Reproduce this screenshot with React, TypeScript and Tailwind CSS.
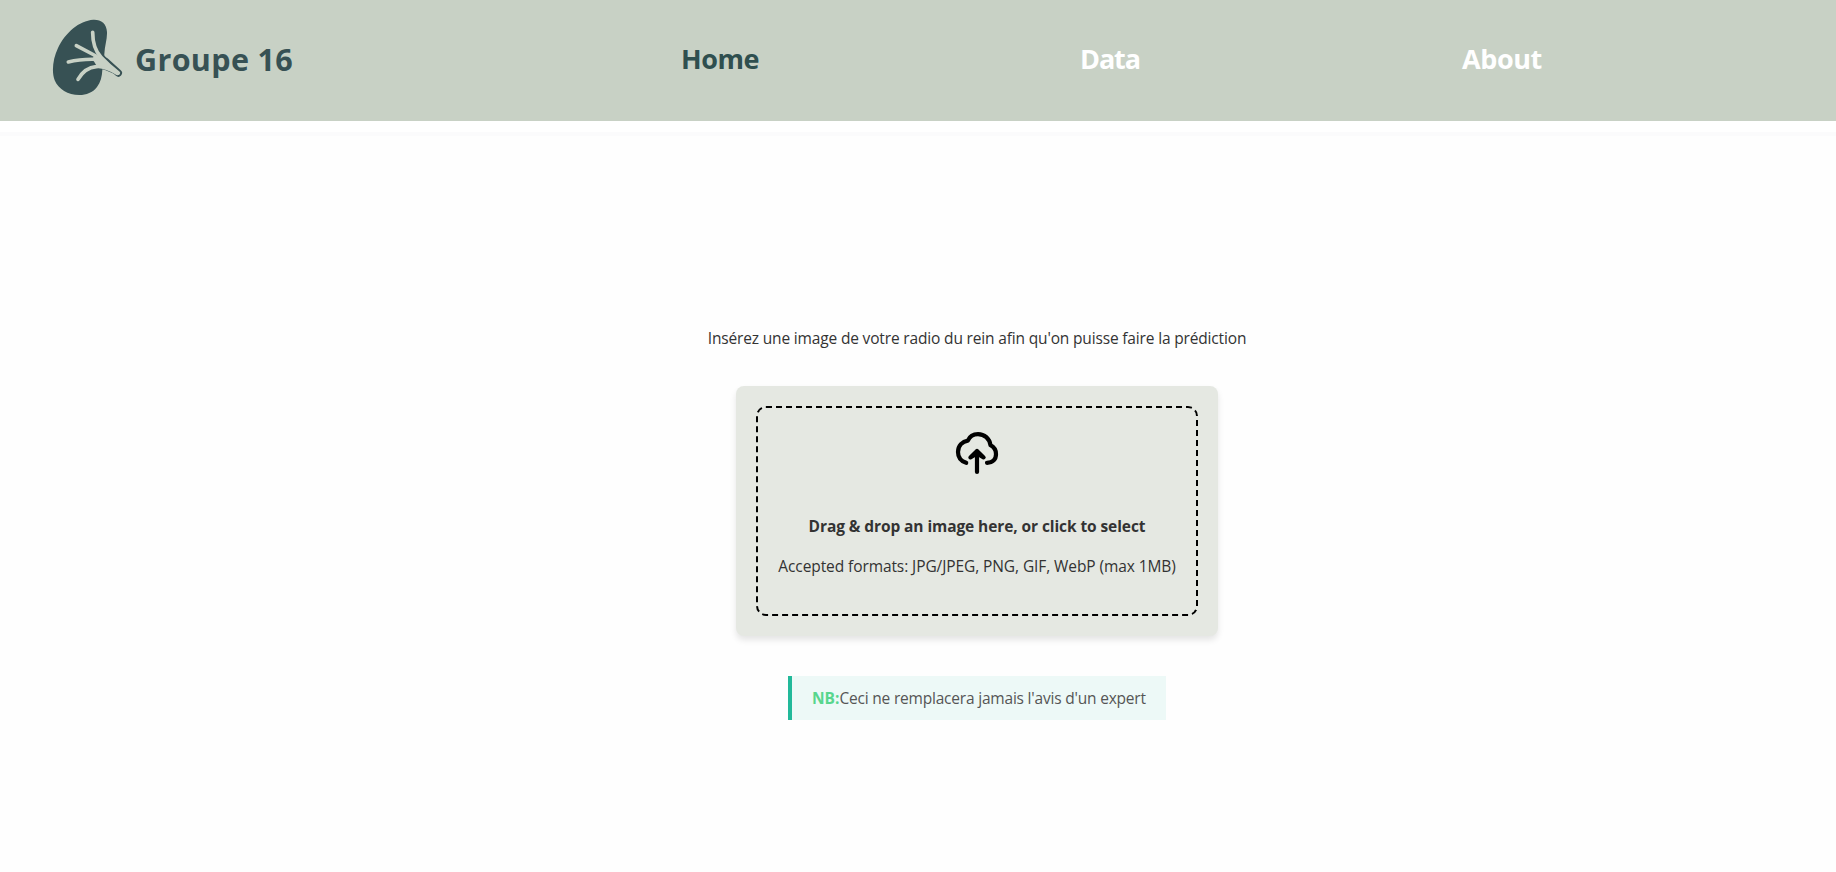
function KidneyLogo() {
  return (
    <svg viewBox="36 24 216 234" className="mt-[18px] h-[78px] w-[72px] shrink-0" fill="none" strokeLinecap="round" strokeLinejoin="round">
      <path
        d="M160 29C183 28 200 40 201 66C202 88 194 108 193 132C193 150 187 164 187 180C186 200 182 217 171 231C158 248 139 255 118 255C84 255 55 238 44 211C34 184 39 145 54 114C76 68 117 32 160 29Z"
        fill="#375154"
      />
      <path d="M186 136C198 152 218 169 235 188C225 190 206 176 184 172Z" fill="#375154" stroke="#375154" strokeWidth="10" />
      <path d="M196 154L235 189" stroke="#375154" strokeWidth="22" />
      <path d="M158 67C158 96 165 123 183 142C199 159 216 174 235 189" stroke="#c8d1c5" strokeWidth="11" />
      <path d="M109 107L168 138" stroke="#c8d1c5" strokeWidth="11" />
      <path d="M85 156C112 149 140 147 170 148" stroke="#c8d1c5" strokeWidth="11" />
      <path d="M114 208C128 184 145 172 169 170C189 167 211 178 232 190" stroke="#c8d1c5" strokeWidth="11" />
      <path d="M163 132L183 140L228 182L172 171L158 148Z" fill="#c8d1c5" />
    </svg>
  );
}

function CloudUploadIcon() {
  return (
    <svg viewBox="0 0 50 50" className="h-[50px] w-[50px]" fill="none" stroke="#000" strokeWidth="4.2" strokeLinecap="round" strokeLinejoin="round">
      <path d="M14.2 32.8C8.6 31 6 27.3 6 22C6 15.6 10.5 11.4 15.8 10.6C17.8 6 21.5 4.1 26 4.1C32.5 4.1 37.5 8.5 38.5 15.2C42 17 44 20 44 24.2C44 29.2 41 32.6 35 32.8" />
      <path d="M25 42V21.5" />
      <path d="M18.4 27.4L25 21L31.6 27.4L25 23.5Z" fill="#000" />
    </svg>
  );
}

export default function App() {
  return (
    <div className="min-h-[872px] bg-[#fefefe] font-['Open_Sans',sans-serif] whitespace-nowrap">
      <header className="flex h-[121px] items-start bg-[#c8d1c5] pl-[52px] font-bold shadow-[0_11px_0_#fff,0_15px_0_#fbfbfc]">
        <KidneyLogo />
        <span className="mt-[39px] ml-[11px] w-[544px] text-[30.5px] leading-10 tracking-[0.35px] text-[#375154]">Groupe 16</span>
        <nav className="mt-[39px] ml-0.5 flex text-[27px] leading-10 text-white">
          <a className="w-[399px] tracking-[-0.5px] text-[#2f4f4f]">Home</a>
          <a className="w-[382px] tracking-[-1.1px]">Data</a>
          <a className="tracking-[-0.4px]">About</a>
        </nav>
      </header>
      <main className="flex flex-col items-center pt-[205px] pl-[118px] text-[15.5px] leading-6 text-[#333]">
        <p className="tracking-[-0.16px]">Insérez une image de votre radio du rein afin qu'on puisse faire la prédiction</p>
        <section className="mt-9 w-[482px] rounded-lg bg-[#e5e8e2] p-5 shadow-[0_4px_6px_rgba(0,0,0,0.1)]">
          <div className="flex h-[210px] flex-col items-center rounded-[10px] border-2 border-dashed border-black pt-[22px]">
            <CloudUploadIcon />
            <p className="mt-[34px] font-bold tracking-[-0.09px]">Drag &amp; drop an image here, or click to select</p>
            <p className="mt-4 tracking-[-0.09px]">Accepted formats: JPG/JPEG, PNG, GIF, WebP (max 1MB)</p>
          </div>
        </section>
        <p className="mt-10 w-[378px] border-l-4 border-[#22b99a] bg-[#edf9f7] py-2.5 pl-5 tracking-[-0.2px] text-[#555]">
          <strong className="font-bold tracking-normal text-[#58d68d]">NB:</strong>Ceci ne remplacera jamais l'avis d'un expert
        </p>
      </main>
    </div>
  );
}
